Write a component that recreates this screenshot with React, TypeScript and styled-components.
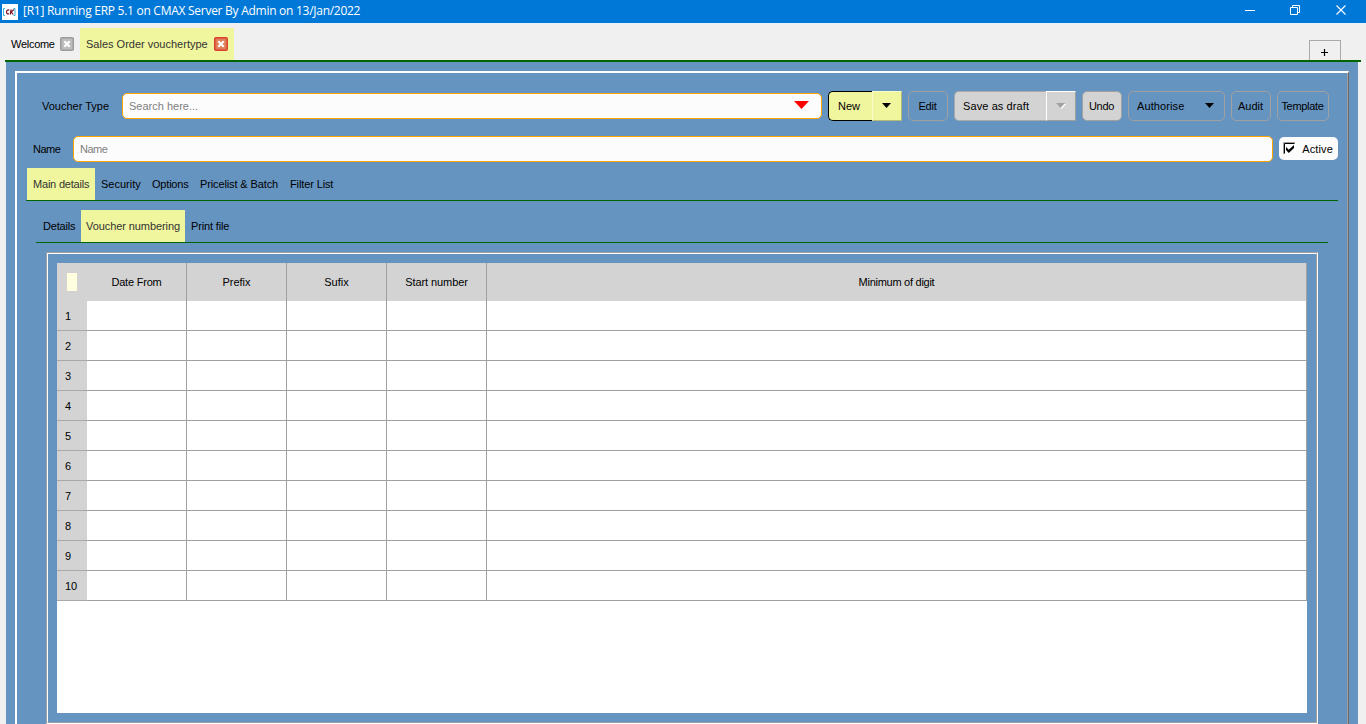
import React from "react";
import styled, { createGlobalStyle, css } from "styled-components";

const BLUE = "#6694c1";
const YELLOW = "#f0f69d";
const GREEN = "#006400";
const GRID = "#a0a0a0";

const GlobalStyle = createGlobalStyle`
  * { box-sizing: border-box; }
  html, body { margin: 0; padding: 0; overflow: hidden; }
  body {
    background: #f0f0f0;
    color: #000;
    font: 11px/14px "Liberation Sans", Arial, sans-serif;
  }
`;

const Window = styled.div`
  width: 1366px;
  height: 724px;
  overflow: hidden;
  display: flex;
  flex-direction: column;
`;

const TitleBar = styled.header`
  height: 23px;
  flex: none;
  background: #0078d7;
  display: flex;
  align-items: center;
  padding-left: 2px;
  color: #fff;
`;

const Title = styled.span<{ $ls: number }>`
  flex: 1;
  margin-left: 5px;
  font: 12px/16px "Open Sans", "Noto Sans", sans-serif;
  padding-bottom: 1px;
  letter-spacing: ${(p) => p.$ls}px;
  white-space: nowrap;
`;

const Text = styled.span<{ $ls?: number }>`
  white-space: nowrap;
  letter-spacing: ${(p) => p.$ls ?? 0}px;
`;

const WindowTabs = styled.nav`
  height: 39px;
  flex: none;
  display: flex;
  align-items: flex-end;
  margin: 0 5px;
  border-bottom: 2px solid ${GREEN};
`;

const WindowTab = styled.div<{ $active?: boolean; $w: number }>`
  width: ${(p) => p.$w}px;
  height: 32px;
  display: flex;
  align-items: center;
  justify-content: space-between;
  padding: 0 6px;
  background: ${(p) => (p.$active ? YELLOW : "transparent")};
  color: ${(p) => (p.$active ? "#333" : "#000")};
`;

const AddTab = styled.button`
  width: 32px;
  height: 20px;
  margin: 0 20px 0 auto;
  padding: 4px 1px 0 0;
  border: 1px solid #a9a9a9;
  border-bottom: 0;
  background: #f0f0f0;
  display: flex;
  justify-content: center;
  align-items: center;
`;

const Workspace = styled.main`
  flex: 1;
  min-height: 0;
  margin: 0 8px 0 6px;
  padding: 9px 9px 0;
  background: ${BLUE};
  display: flex;
`;

const Frame = styled.section`
  flex: 1;
  border: 2px solid #fff;
  border-bottom: 0;
  border-right: 1px solid #696969;
  box-shadow: inset -1px 0 #a0a0a0;
  padding-top: 18px;
  display: flex;
  flex-direction: column;
`;

const Toolbar = styled.div`
  height: 30px;
  flex: none;
  display: flex;
  align-items: center;
  gap: 6px;
  padding-left: 25px;
`;

const FieldLabel = styled.label<{ $w: number }>`
  width: ${(p) => p.$w}px;
  margin-right: -6px;
`;

const Field = styled.div<{ $w: number }>`
  width: ${(p) => p.$w}px;
  height: 26px;
  flex: none;
  display: flex;
  align-items: center;
  justify-content: space-between;
  padding: 0 11px 0 6px;
  border: 1px solid #ffa500;
  border-radius: 5px;
  background: #fcfcfc;
  color: #808080;
`;

const Button = styled.button<{ $w: number; $filled?: boolean }>`
  width: ${(p) => p.$w}px;
  height: 30px;
  flex: none;
  padding: 0 1px 0 0;
  display: flex;
  align-items: center;
  justify-content: center;
  font: inherit;
  color: #000;
  border: 1px solid #a0a0a0;
  border-radius: 5px;
  background: ${(p) => (p.$filled ? "#d3d3d3" : "transparent")};
`;

const MenuButton = styled(Button)`
  justify-content: space-between;
  padding: 0 9px 0 8px;
`;

const SplitButton = styled.div`
  height: 30px;
  display: flex;
`;

const splitColors = {
  primary: css`background: ${YELLOW}; border-color: #000;`,
  muted: css`background: #d3d3d3; border-color: #a9a9a9;`,
};

const SplitMain = styled.button<{ $w: number; $tone: "primary" | "muted" }>`
  width: ${(p) => p.$w}px;
  padding: 0 0 0 ${(p) => (p.$tone === "primary" ? 9 : 8)}px;
  text-align: left;
  font: inherit;
  color: #000;
  border: 1px solid;
  border-right: 0;
  border-radius: 5px 0 0 5px;
  ${(p) => splitColors[p.$tone]}
`;

const SplitArrow = styled.button<{ $tone: "primary" | "muted" }>`
  width: 30px;
  padding: 1px 1px 0 0;
  display: flex;
  align-items: center;
  justify-content: center;
  border: 1px solid;
  ${(p) =>
    p.$tone === "primary"
      ? css`background: ${YELLOW}; border-color: #f8fbce #b4b976 #b4b976 #f8fbce;`
      : css`background: #d3d3d3; border-color: #fff #9e9e9e #9e9e9e #fff;`}
`;

const NameRow = styled.div`
  height: 26px;
  flex: none;
  margin-top: 15px;
  padding-left: 16px;
  display: flex;
  align-items: center;
  gap: 6px;
`;

const ActiveBox = styled.label`
  width: 59px;
  height: 23px;
  margin-top: -1px;
  padding: 0 5px 0 4px;
  display: flex;
  align-items: center;
  justify-content: space-between;
  border-radius: 5px;
  background: #fcfcfc;
`;

const TabStrip = styled.nav<{ $inset: number; $top: number }>`
  height: 33px;
  flex: none;
  margin: ${(p) => p.$top}px ${(p) => p.$inset + 1}px 0 ${(p) => p.$inset}px;
  padding-left: 1px;
  display: flex;
  border-bottom: 1px solid ${GREEN};
`;

const Tab = styled.div<{ $w: number; $pad?: number; $active?: boolean }>`
  width: ${(p) => p.$w}px;
  height: 32px;
  padding-left: ${(p) => p.$pad ?? 6}px;
  display: flex;
  align-items: center;
  background: ${(p) => (p.$active ? YELLOW : "transparent")};
  color: ${(p) => (p.$active ? "#333" : "#000")};
`;

const GroupBox = styled.div`
  width: 1272px;
  height: 472px;
  flex: none;
  margin: 9px 0 0 29px;
  border: 1px solid;
  border-color: #a0a0a0 #fff #fff #a0a0a0;
`;

const GroupInner = styled.div`
  height: 470px;
  border: 1px solid;
  border-color: #fff #a0a0a0 #a0a0a0 #fff;
  padding: 9px;
`;

const TableArea = styled.div`
  height: 450px;
  background: #fff;
`;

const Row = styled.div`
  height: 30px;
  display: grid;
  grid-template-columns: 30px repeat(4, 100px) 1fr;
`;

const HeaderRow = styled(Row)`
  height: 38px;
  background: #d3d3d3;
`;

const HeaderCell = styled.div`
  display: flex;
  align-items: center;
  justify-content: center;
  border-right: 1px solid ${GRID};
`;

const Corner = styled.div`
  padding: 10px;
`;

const CornerMark = styled.div`
  width: 10px;
  height: 18px;
  background: #ffffe0;
`;

const RowHeader = styled.div`
  background: #d3d3d3;
  border-bottom: 1px solid #a9a9a9;
  padding: 8px 0 0 8px;
`;

const Cell = styled.div`
  border-right: 1px solid ${GRID};
  border-bottom: 1px solid ${GRID};
`;

const AppIcon = () => (
  <svg width="16" height="16" viewBox="0 0 16 16">
    <rect width="16" height="16" fill="#fff" />
    <path d="M3 4.500H1.500V11.500H3M11.500 4.500h1.500v7H11.500" fill="none" stroke="#35b4d8" />
    <path d="M7.300 6.200C6 5.200 4.500 6.500 4.500 8s1 2.500 2.500 1.500M9 5.500L8.300 10.500M11.800 5.500L9.200 8l2 2.500" fill="none" stroke="#7b1022" strokeWidth="1.200" />
  </svg>
);

const CloseIcon = ({ red }: { red?: boolean }) => (
  <svg width="14" height="14" viewBox="0 0 14 14">
    <rect x=".75" y=".75" width="12.500" height="12.500" rx="1.200" fill={red ? "#e08058" : "#bcbcbc"} stroke={red ? "#dc4030" : "#9c9c9c"} strokeWidth="1.500" />
    <path d="M4.300 4.300l5.400 5.400M9.700 4.300L4.300 9.700" stroke="#fff" strokeWidth="2.200" />
  </svg>
);

const WindowControls = () => (
  <svg width="121" height="23" viewBox="0 0 121 23" fill="none" stroke="#fff">
    <path d="M0 10.500h10" />
    <path d="M45.500 7.500h7v7h-7zM47.500 7.500v-2h7v7h-2" />
    <path d="M91.500 5.500l9 9M100.500 5.500l-9 9" strokeWidth="1.100" />
  </svg>
);

const Arrow = ({ fill = "#000", w = 9, shadow }: { fill?: string; w?: number; shadow?: boolean }) => {
  const h = Math.ceil(w / 2);
  return (
    <svg width={w + 1} height={h + 2} viewBox={`0 0 ${w + 1} ${h + 2}`}>
      {shadow && <path d={`M1 1H${w + 1}L${w / 2 + 1} ${h + 1}z`} fill="#fff" />}
      <path d={`M0 0H${w}L${w / 2} ${h}z`} fill={fill} />
    </svg>
  );
};

const CheckMark = () => (
  <svg width="12" height="13" viewBox="0 0 12 13" fill="none">
    <path d="M.5 12V.5H12" stroke="#a0a0a0" />
    <path d="M1.500 11.500V1.500H11.500" stroke="#000" />
    <path d="M3 5l2.800 2.800L11 3v3l-5.200 5L3 8z" fill="#000" />
  </svg>
);

const columns = [
  { name: "Date From", ls: -0.2 },
  { name: "Prefix", ls: 0 },
  { name: "Sufix", ls: 0 },
  { name: "Start number", ls: -0.08 },
  { name: "Minimum of digit", ls: -0.27 },
];
const rows = Array.from({ length: 10 }, (_, i) => i + 1);

export default function App() {
  return (
    <>
      <GlobalStyle />
      <Window>
        <TitleBar>
          <AppIcon />
          <Title $ls={-0.27}>[R1] Running ERP 5.1 on CMAX Server By Admin on 13/Jan/2022</Title>
          <WindowControls />
        </TitleBar>
        <WindowTabs>
          <WindowTab $w={75}>
            <Text $ls={-0.28}>Welcome</Text>
            <CloseIcon />
          </WindowTab>
          <WindowTab $active $w={154}>
            <Text>Sales Order vouchertype</Text>
            <CloseIcon red />
          </WindowTab>
          <AddTab aria-label="Add tab">
            <svg width="7" height="7" viewBox="0 0 7 7">
              <path d="M0 3.500h7M3.500 0v7" stroke="#000" strokeWidth="1.200" />
            </svg>
          </AddTab>
        </WindowTabs>
        <Workspace>
          <Frame>
            <Toolbar>
              <FieldLabel $w={80}><Text>Voucher Type</Text></FieldLabel>
              <Field $w={700}>
                <Text>Search here...</Text>
                <Arrow fill="#f00" w={15} />
              </Field>
              <SplitButton>
                <SplitMain $w={44} $tone="primary"><Text>New</Text></SplitMain>
                <SplitArrow $tone="primary"><Arrow /></SplitArrow>
              </SplitButton>
              <Button $w={40}><Text $ls={-0.2}>Edit</Text></Button>
              <SplitButton>
                <SplitMain $w={92} $tone="muted"><Text $ls={0.1}>Save as draft</Text></SplitMain>
                <SplitArrow $tone="muted"><Arrow fill="#a0a0a0" shadow /></SplitArrow>
              </SplitButton>
              <Button $w={40} $filled><Text $ls={-0.3}>Undo</Text></Button>
              <MenuButton $w={97}><Text $ls={0.1}>Authorise</Text><Arrow /></MenuButton>
              <Button $w={40}><Text>Audit</Text></Button>
              <Button $w={52}><Text $ls={-0.3}>Template</Text></Button>
            </Toolbar>
            <NameRow>
              <FieldLabel $w={40}><Text $ls={-0.5}>Name</Text></FieldLabel>
              <Field $w={1200}><Text $ls={-0.5}>Name</Text></Field>
              <ActiveBox><CheckMark /><Text $ls={0.15}>Active</Text></ActiveBox>
            </NameRow>
            <TabStrip $inset={9} $top={6}>
              <Tab $w={68} $active><Text $ls={-0.2}>Main details</Text></Tab>
              <Tab $w={51}><Text>Security</Text></Tab>
              <Tab $w={48}><Text $ls={-0.2}>Options</Text></Tab>
              <Tab $w={90}><Text $ls={-0.12}>Pricelist &amp; Batch</Text></Tab>
              <Tab $w={60}><Text $ls={-0.12}>Filter List</Text></Tab>
            </TabStrip>
            <TabStrip $inset={19} $top={9}>
              <Tab $w={44}><Text $ls={-0.2}>Details</Text></Tab>
              <Tab $w={104} $pad={5} $active><Text $ls={-0.08}>Voucher numbering</Text></Tab>
              <Tab $w={60}><Text $ls={-0.15}>Print file</Text></Tab>
            </TabStrip>
            <GroupBox>
              <GroupInner>
                <TableArea>
                  <HeaderRow>
                    <Corner><CornerMark /></Corner>
                    {columns.map((c) => (
                      <HeaderCell key={c.name}><Text $ls={c.ls}>{c.name}</Text></HeaderCell>
                    ))}
                  </HeaderRow>
                  {rows.map((n) => (
                    <Row key={n}>
                      <RowHeader>{n}</RowHeader>
                      {columns.map((c) => <Cell key={c.name} />)}
                    </Row>
                  ))}
                </TableArea>
              </GroupInner>
            </GroupBox>
          </Frame>
        </Workspace>
      </Window>
    </>
  );
}
